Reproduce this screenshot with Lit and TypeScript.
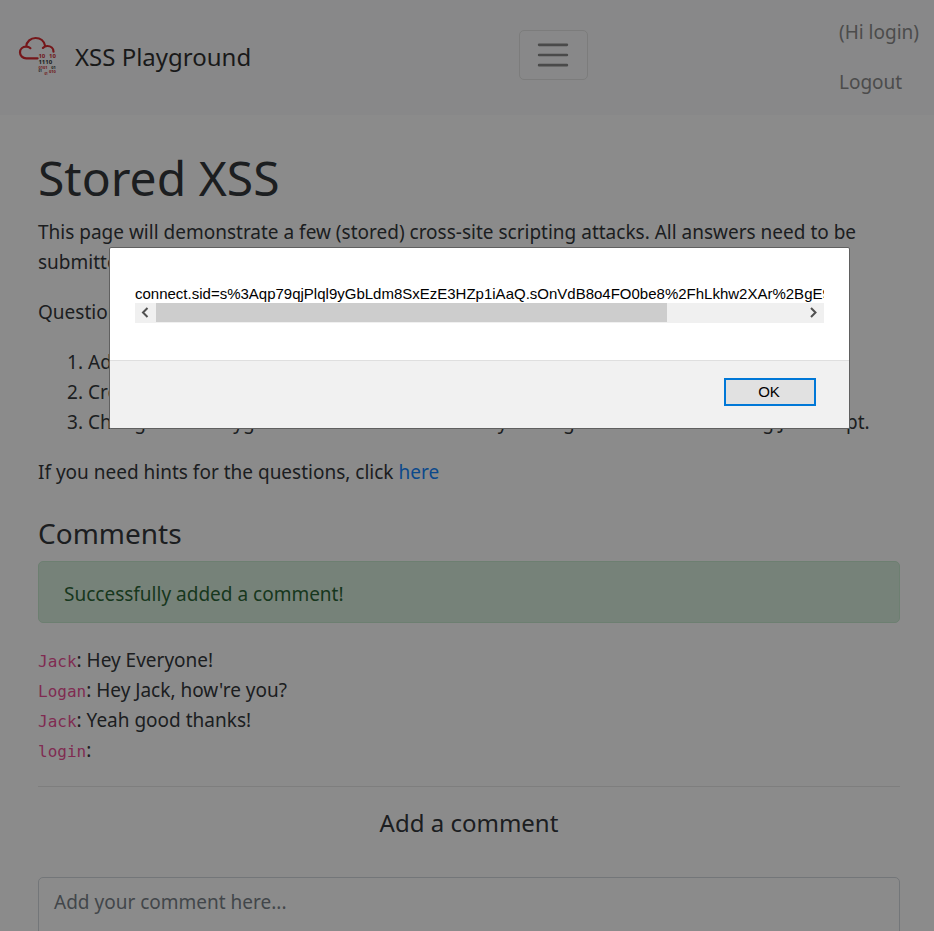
import { LitElement, html, css } from "lit";
import { customElement } from "lit/decorators.js";

const COOKIE =
  "connect.sid=s%3Aqp79qjPlql9yGbLdm8SxEzE3HZp1iAaQ.sOnVdB8o4FO0be8%2FhLkhw2XAr%2BgE9oA";

const comments = [
  { author: "Jack", text: "Hey Everyone!" },
  { author: "Logan", text: "Hey Jack, how're you?" },
  { author: "Jack", text: "Yeah good thanks!" },
  { author: "login", text: "" },
];

@customElement("site-nav")
class SiteNav extends LitElement {
  static styles = css`
    :host { display: block; }
    .nav {
      display: flex;
      align-items: center;
      justify-content: space-between;
      box-sizing: border-box;
      min-height: 115px;
      padding: 0 15px 1px 19px;
      background: #f8f9fa;
    }
    .brand {
      display: flex;
      align-items: center;
      gap: 18px;
      margin-right: 16px;
      color: #1a1a1a;
      font-size: 24px;
      line-height: 38px;
      text-decoration: none;
    }
    .logo { width: 38px; height: 40px; overflow: visible; }
    .cloud { fill: none; stroke: #d3161d; stroke-width: 2.2; stroke-linecap: round; }
    .digits { font-family: "Noto Sans", sans-serif; font-weight: 700; }
    .red { fill: #c8141b; }
    .dark { fill: #212529; }
    .large { font-size: 6px; }
    .small { font-size: 4px; }
    .tiny { font-size: 3px; }
    .toggler {
      display: flex;
      align-items: center;
      justify-content: center;
      width: 69px;
      height: 50px;
      margin-bottom: 4px;
      padding: 0;
      background: transparent;
      border: 1px solid #e0e0e0;
      border-radius: 5px;
    }
    .bars { width: 38px; height: 38px; stroke: rgba(0, 0, 0, 0.5); stroke-width: 2; stroke-linecap: round; }
    .links { display: flex; flex-direction: column; gap: 20px; margin: 0; padding: 0; list-style: none; }
    .link { color: #808080; font-size: 19px; line-height: 30px; text-decoration: none; }
  `;
  render() {
    return html`
      <nav class="nav">
        <a class="brand" href="#">
          <svg class="logo" viewBox="0 0 38 40" aria-hidden="true">
            <path class="cloud" d="M18.600 21.300H7.200C3.800 21.300 1 18.700 1 15.400S3.700 9.700 7.100 9.700C8.800 9.700 10.300 10.100 11.400 11.200M7.200 9.500C7.700 4.600 11.600 1 16.600 1C21.400 1 25.200 4.200 26.100 8.900M23.900 10.900C25 9.700 26.600 9 28.300 9C31.800 9 34.500 11.400 34.500 14.700" />
            <g class="digits">
              <text class="red large" x="19.4" y="21.2">10</text>
              <text class="red large" x="30" y="21.2">10</text>
              <text class="dark large" x="19.4" y="27.4">1110</text>
              <text class="red small" x="19.5" y="31.8">0101</text>
              <text class="dark small" x="32.3" y="31.8">01</text>
              <text class="dark tiny" x="19.5" y="35.2">01</text>
              <text class="red small" x="30" y="35.8">010</text>
              <text class="red tiny" x="25.4" y="38.4">01</text>
            </g>
          </svg>
          <span>XSS Playground</span>
        </a>
        <button class="toggler" type="button" aria-label="Toggle navigation">
          <svg class="bars" viewBox="0 0 30 30" aria-hidden="true">
            <path d="M4 7h22M4 15h22M4 23h22" />
          </svg>
        </button>
        <ul class="links">
          <li><a class="link" href="#">(Hi login)</a></li>
          <li><a class="link" href="#">Logout</a></li>
        </ul>
      </nav>
    `;
  }
}

@customElement("alert-dialog")
class AlertDialog extends LitElement {
  static styles = css`
    :host {
      position: fixed;
      inset: 0;
      display: flex;
      align-items: flex-start;
      justify-content: center;
      box-sizing: border-box;
      padding: 247px 0 0 25px;
      background: rgba(24, 24, 24, 0.5);
      font-family: "Liberation Sans", Arial, sans-serif;
    }
    .dialog {
      width: 739px;
      max-width: 90%;
      background: #fff;
      border: 1px solid #606060;
      border-radius: 2px;
      overflow: hidden;
    }
    .body { padding: 36px 25px 37px; }
    .message { overflow: hidden; color: #000; font-size: 15px; line-height: 19px; white-space: nowrap; }
    .scroll { display: flex; height: 20px; background: #f0f0f0; }
    .arrow {
      display: flex;
      align-items: center;
      justify-content: center;
      width: 21px;
      padding: 0;
      background: transparent;
      border: 0;
    }
    .chevron { width: 10px; height: 12px; fill: none; stroke: #505050; stroke-width: 2; }
    .track { flex: 1; }
    .thumb { width: 79%; height: 19px; background: #cdcdcd; }
    .footer {
      display: flex;
      justify-content: flex-end;
      padding: 17px 33px 22px;
      background: #f1f1f1;
      border-top: 1px solid #dfdfdf;
    }
    .ok {
      width: 92px;
      height: 28px;
      padding: 0 2px 2px 0;
      color: #000;
      background: #e1e1e1;
      border: 2px solid #0078d7;
      font-family: inherit;
      font-size: 15px;
    }
  `;
  render() {
    return html`
      <div class="dialog" role="alertdialog" aria-modal="true" aria-labelledby="message">
        <div class="body">
          <div class="message" id="message">${COOKIE}</div>
          <div class="scroll">
            <button class="arrow" type="button" aria-label="Scroll left">
              <svg class="chevron" viewBox="0 0 10 12"><path d="M6.500 1L2 5.500l4.500 4.500" /></svg>
            </button>
            <div class="track"><div class="thumb"></div></div>
            <button class="arrow" type="button" aria-label="Scroll right">
              <svg class="chevron" viewBox="0 0 10 12"><path d="M2 1l4.500 4.500L2 10" /></svg>
            </button>
          </div>
        </div>
        <div class="footer"><button class="ok" type="button">OK</button></div>
      </div>
    `;
  }
}

@customElement("app-root")
class AppRoot extends LitElement {
  static styles = css`
    :host {
      display: block;
      height: 100vh;
      overflow: hidden;
      background: #fff;
      color: #212529;
      font-family: "Noto Sans", "Open Sans", sans-serif;
      font-size: 19px;
      line-height: 30px;
    }
    .page { padding: 33px 34px 34px 38px; }
    .title { margin: 0 0 9px; font-size: 48px; font-weight: 400; line-height: 60px; }
    .para { margin: 0 0 20px; }
    .tasks { margin: 0 0 20px; padding-left: 50px; }
    .hint { color: #007bff; text-decoration: none; }
    .heading { margin: 28px 0 10px; font-size: 28px; font-weight: 400; line-height: 36px; }
    .notice {
      padding: 17px 25px 13px;
      color: #155724;
      background: #d4edda;
      border: 1px solid #c3e6cb;
      border-radius: 5px;
    }
    .comments { display: flex; flex-direction: column; margin: 22px 0 21px; }
    .author {
      color: #e83e8c;
      font-family: "DejaVu Sans Mono", monospace;
      font-size: 16px;
      line-height: 16px;
    }
    .rule { margin: 0; border: 0; border-top: 1px solid rgba(0, 0, 0, 0.1); }
    .form { display: flex; flex-direction: column; }
    .label { margin: 20px 0 38px; font-size: 24px; line-height: 32px; text-align: center; }
    .input {
      box-sizing: border-box;
      width: 100%;
      height: 140px;
      padding: 9px 15px;
      background: #fff;
      border: 1px solid #ced4da;
      border-radius: 5px;
      font: inherit;
      resize: none;
    }
    .input::placeholder { color: #6c757d; opacity: 1; }
  `;
  render() {
    return html`
      <site-nav></site-nav>
      <main class="page">
        <h1 class="title">Stored XSS</h1>
        <p class="para">
          This page will demonstrate a few (stored) cross-site scripting attacks. All answers need to be submitted on TryHackMe.
        </p>
        <p class="para">Questions:</p>
        <ol class="tasks">
          <li>Add a comment and see if you can insert some of your own HTML.</li>
          <li>Create an alert popup box appear on the page with your document cookies.</li>
          <li>Change "XSS Playground" to "I am a hacker" by adding a comment and using Javascript.</li>
        </ol>
        <p class="para">If you need hints for the questions, click <a class="hint" href="#">here</a></p>
        <h2 class="heading">Comments</h2>
        <div class="notice" role="status">Successfully added a comment!</div>
        <div class="comments">
          ${comments.map((c) => html`<div><span class="author">${c.author}</span>: ${c.text}</div>`)}
        </div>
        <hr class="rule" />
        <form class="form">
          <label class="label" for="comment">Add a comment</label>
          <textarea class="input" id="comment" placeholder="Add your comment here..."></textarea>
        </form>
      </main>
      <alert-dialog></alert-dialog>
    `;
  }
}
